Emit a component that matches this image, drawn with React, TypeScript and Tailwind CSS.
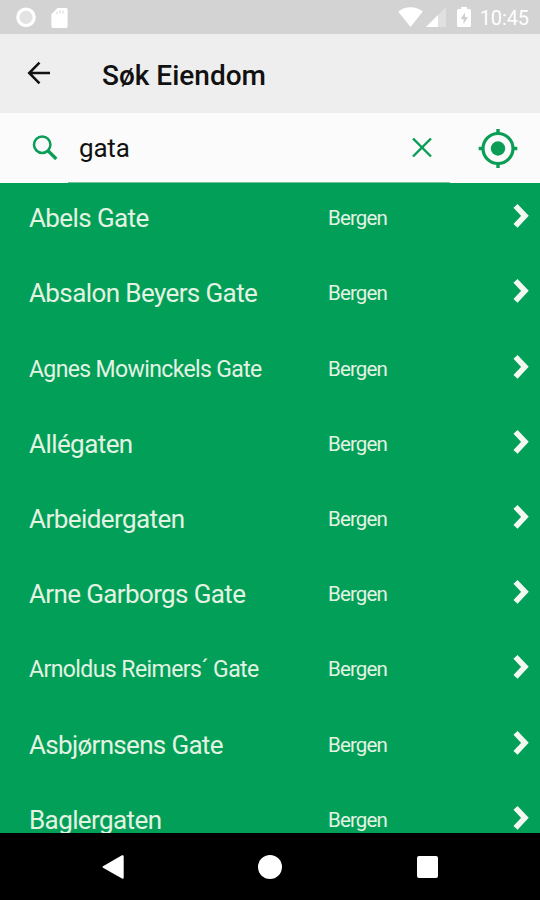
import { useState } from "react"

const streets = [
  { name: 'Abels Gate', city: 'Bergen', size: 'text-[26px] tracking-[-0.6px]' },
  { name: 'Absalon Beyers Gate', city: 'Bergen', size: 'text-[26px] tracking-[-0.6px]' },
  { name: 'Agnes Mowinckels Gate', city: 'Bergen', size: 'mt-px text-[23px] tracking-[-0.63px]' },
  { name: 'Allégaten', city: 'Bergen', size: 'text-[26px] tracking-[-0.57px]' },
  { name: 'Arbeidergaten', city: 'Bergen', size: 'text-[26px] tracking-[-0.57px]' },
  { name: 'Arne Garborgs Gate', city: 'Bergen', size: 'text-[26px] tracking-[-0.63px]' },
  { name: 'Arnoldus Reimers´ Gate', city: 'Bergen', size: 'mt-px text-[23px] tracking-[-0.57px]' },
  { name: 'Asbjørnsens Gate', city: 'Bergen', size: 'text-[26px] tracking-[-0.68px]' },
  { name: 'Baglergaten', city: 'Bergen', size: 'text-[26px] tracking-[-0.6px]' },
]

function StatusBar() {
  return (
    <div className="flex h-[34px] shrink-0 items-center bg-[#d3d3d3] pl-4 pr-[11px] text-white">
      <svg className="h-5 w-5" viewBox="0 0 20 20">
        <circle cx="10" cy="10.3" r="8.2" fill="#e3e3e3" stroke="currentColor" strokeWidth="3.2" />
      </svg>
      <svg className="ml-[15px] mt-px h-5 w-[17px]" viewBox="0 0 17 20" fill="currentColor">
        <path d="M6.5 0H15a1.6 1.6 0 0 1 1.6 1.6v16.8A1.6 1.6 0 0 1 15 20H2a1.6 1.6 0 0 1-1.6-1.6V6.3z" />
        <path d="M6 3.8v2.4M9 2.5v3M12 2.5v3" stroke="#dedede" strokeWidth="1.2" />
      </svg>
      <div className="ml-auto flex items-center">
        <svg className="h-5 w-[25px]" viewBox="0 0 26 20" preserveAspectRatio="none" fill="currentColor">
          <path d="M0.2 4.6C7.5-1.2 18.5-1.2 25.8 4.6L13 20z" />
        </svg>
        <svg className="ml-[3px] h-5 w-5" viewBox="0 0 20 20" fill="currentColor">
          <path d="M20 0v20H0z" opacity="0.3" />
          <path d="M12 8v12H0z" />
        </svg>
        <svg className="ml-[11px] h-5 w-[14px]" viewBox="0 0 14 20">
          <path d="M4 0h6v2h2.5A1.5 1.5 0 0 1 14 3.5v15a1.5 1.5 0 0 1-1.5 1.5h-11A1.5 1.5 0 0 1 0 18.5v-15A1.5 1.5 0 0 1 1.5 2H4z" fill="currentColor" />
          <path d="M8 5.5l-4.5 6.5h3v5l4.5-7H8z" fill="#cfcfcf" />
        </svg>
        <span className="ml-[9px] mt-0.5 text-[20px] leading-none tracking-[-0.1px]">10:45</span>
      </div>
    </div>
  )
}

function Header() {
  return (
    <header className="flex h-[79px] shrink-0 items-center bg-[#eeeeee] pl-[27px] text-[#111]">
      <button className="-mt-px h-6 w-6" aria-label="Tilbake">
        <svg viewBox="0 0 24 24" fill="none" stroke="currentColor" strokeWidth="2.5">
          <path d="M23 12H2.5M12.5 1.7L2.2 12l10.3 10.3" />
        </svg>
      </button>
      <h1 className="ml-[51px] mt-[5px] text-[28px] font-medium leading-9">Søk Eiendom</h1>
    </header>
  )
}

function SearchBar() {
  const [query, setQuery] = useState('gata')

  return (
    <div className="flex h-[70px] shrink-0 bg-[#fbfbfb] text-[#0a9d56]">
      <svg className="ml-[32px] mt-[21px] h-[26px] w-[26px]" viewBox="0 0 26 26" fill="none" stroke="currentColor">
        <circle cx="10.2" cy="10.7" r="8.2" strokeWidth="2.5" />
        <path d="M15.8 16.5L24.3 25" strokeWidth="3.3" />
      </svg>
      <div className="ml-[10px] flex w-[382px] border-b border-[#73c49b] pl-[11px]">
        <input
          value={query}
          onChange={(e) => setQuery(e.target.value)}
          className="w-[333px] bg-transparent pt-0.5 text-[26px] tracking-[-0.2px] text-[#111] outline-none"
        />
        <button className="h-[70px] w-5" aria-label="Tøm" onClick={() => setQuery('')}>
          <svg className="h-5 w-5" viewBox="0 0 20 20" fill="none" stroke="currentColor" strokeWidth="2.4">
            <path d="M1 0.5l18 18M19 0.5L1 18.5" />
          </svg>
        </button>
      </div>
      <button className="ml-[28px] mt-[15px] h-10 w-10" aria-label="Min posisjon">
        <svg viewBox="0 0 40 40" fill="none" stroke="currentColor">
          <circle cx="20" cy="20.5" r="15" strokeWidth="3.2" />
          <circle cx="20" cy="20.5" r="7.2" fill="currentColor" stroke="none" />
          <path d="M20 1v5M20 35v5M0.7 20.5h5M34.3 20.5h5" strokeWidth="3.4" />
        </svg>
      </button>
    </div>
  )
}

function StreetList() {
  return (
    <ul className="h-[650px] shrink-0 overflow-hidden bg-[#029f59] text-[#e3f3e2]">
      {streets.map((street) => (
        <li key={street.name} className="flex h-[75.2px] items-start pl-[29px] pr-[11px] pt-[17.2px]">
          <span className={`w-[299px] whitespace-nowrap leading-9 ${street.size}`}>{street.name}</span>
          <span className="text-[20.5px] leading-9 tracking-[-0.85px]">{street.city}</span>
          <svg className="ml-auto mt-[3px] h-[25px] w-4" viewBox="0 0 16 25" fill="none" stroke="#f3f8f1" strokeWidth="5.6">
            <path d="M2.5 2.8l9.4 10-9.4 10" />
          </svg>
        </li>
      ))}
    </ul>
  )
}

function NavigationBar() {
  return (
    <div className="flex h-[67px] shrink-0 items-center bg-black text-white">
      <svg className="ml-[102px] h-6 w-[22px]" viewBox="0 0 22 24" fill="currentColor">
        <path d="M20 0.3Q21.7-0.3 21.7 1.5V22.5Q21.7 24.3 20 23.5L1 12.7Q0 12 1 11.3z" />
      </svg>
      <div className="ml-[134px] h-6 w-6 rounded-full bg-white" />
      <div className="ml-[135px] h-[22px] w-[21px] rounded-[2px] bg-white" />
    </div>
  )
}

export default function App() {
  return (
    <div className="flex h-[900px] w-[540px] flex-col overflow-hidden font-[Roboto,sans-serif]">
      <StatusBar />
      <Header />
      <SearchBar />
      <StreetList />
      <NavigationBar />
    </div>
  )
}
